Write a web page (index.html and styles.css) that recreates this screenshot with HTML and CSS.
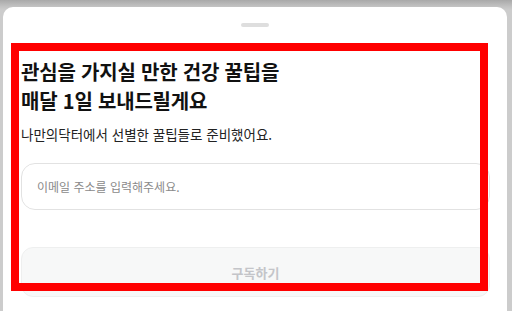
FILE: index.html
```html
<!DOCTYPE html>
<html lang="ko">
<head>
<meta charset="utf-8">
<link rel="stylesheet" href="styles.css">
</head>
<body>
<div class="sheet">
  <div class="handle"></div>
  <div class="content">
    <h1 class="title">관심을 가지실 만한 건강 꿀팁을<br>매달 1일 보내드릴게요</h1>
    <p class="sub">나만의닥터에서 선별한 꿀팁들로 준비했어요.</p>
    <div class="input">이메일 주소를 입력해주세요.</div>
    <div class="button">구독하기</div>
  </div>
</div>
<div class="highlight"></div>
</body>
</html>
```
FILE: styles.css
```css
html, body {
  margin: 0;
  padding: 0;
  height: 100%;
  overflow: hidden;
}
body {
  background: linear-gradient(to bottom, #a9a9a9 0px, #c4c4c4 7px, #cccccc 10px);
  font-family: "Noto Sans CJK KR", "Noto Sans", sans-serif;
  color: #111;
  position: relative;
}
.sheet {
  margin: 7px 0 0 3px;
  width: 504px;
  height: 304px;
  background: #fff;
  border-radius: 10px 10px 0 0;
  display: flex;
  flex-direction: column;
  overflow: hidden;
}
.handle {
  width: 28px;
  height: 4px;
  border-radius: 2px;
  background: #dedede;
  margin: 16px auto 0;
  flex: none;
}
.content {
  padding: 30px 17px 0 18px;
  display: flex;
  flex-direction: column;
}
.title {
  margin: 0;
  font-size: 20px;
  line-height: 29px;
  font-weight: 700;
  letter-spacing: -0.2px;
  color: #111;
}
.sub {
  margin: 9px 0 0;
  font-size: 13.5px;
  line-height: 20px;
  color: #222;
}
.input {
  margin-top: 19px;
  height: 47px;
  flex: none;
  box-sizing: border-box;
  border: 1px solid #e2e2e2;
  border-radius: 14px;
  padding-left: 15px;
  display: flex;
  align-items: center;
  font-size: 12px;
  color: #8a8a8a;
}
.button {
  margin-top: 37px;
  height: 50px;
  flex: none;
  box-sizing: border-box;
  border: 1px solid #eeefef;
  border-radius: 12px;
  background: #f7f8f8;
  display: flex;
  align-items: center;
  justify-content: center;
  font-size: 13px;
  font-weight: 700;
  color: #c4c5c9;
}
.highlight {
  position: absolute;
  left: 11px;
  top: 43px;
  width: 477px;
  height: 248px;
  box-sizing: border-box;
  border: 8px solid #ff0000;
}
```
